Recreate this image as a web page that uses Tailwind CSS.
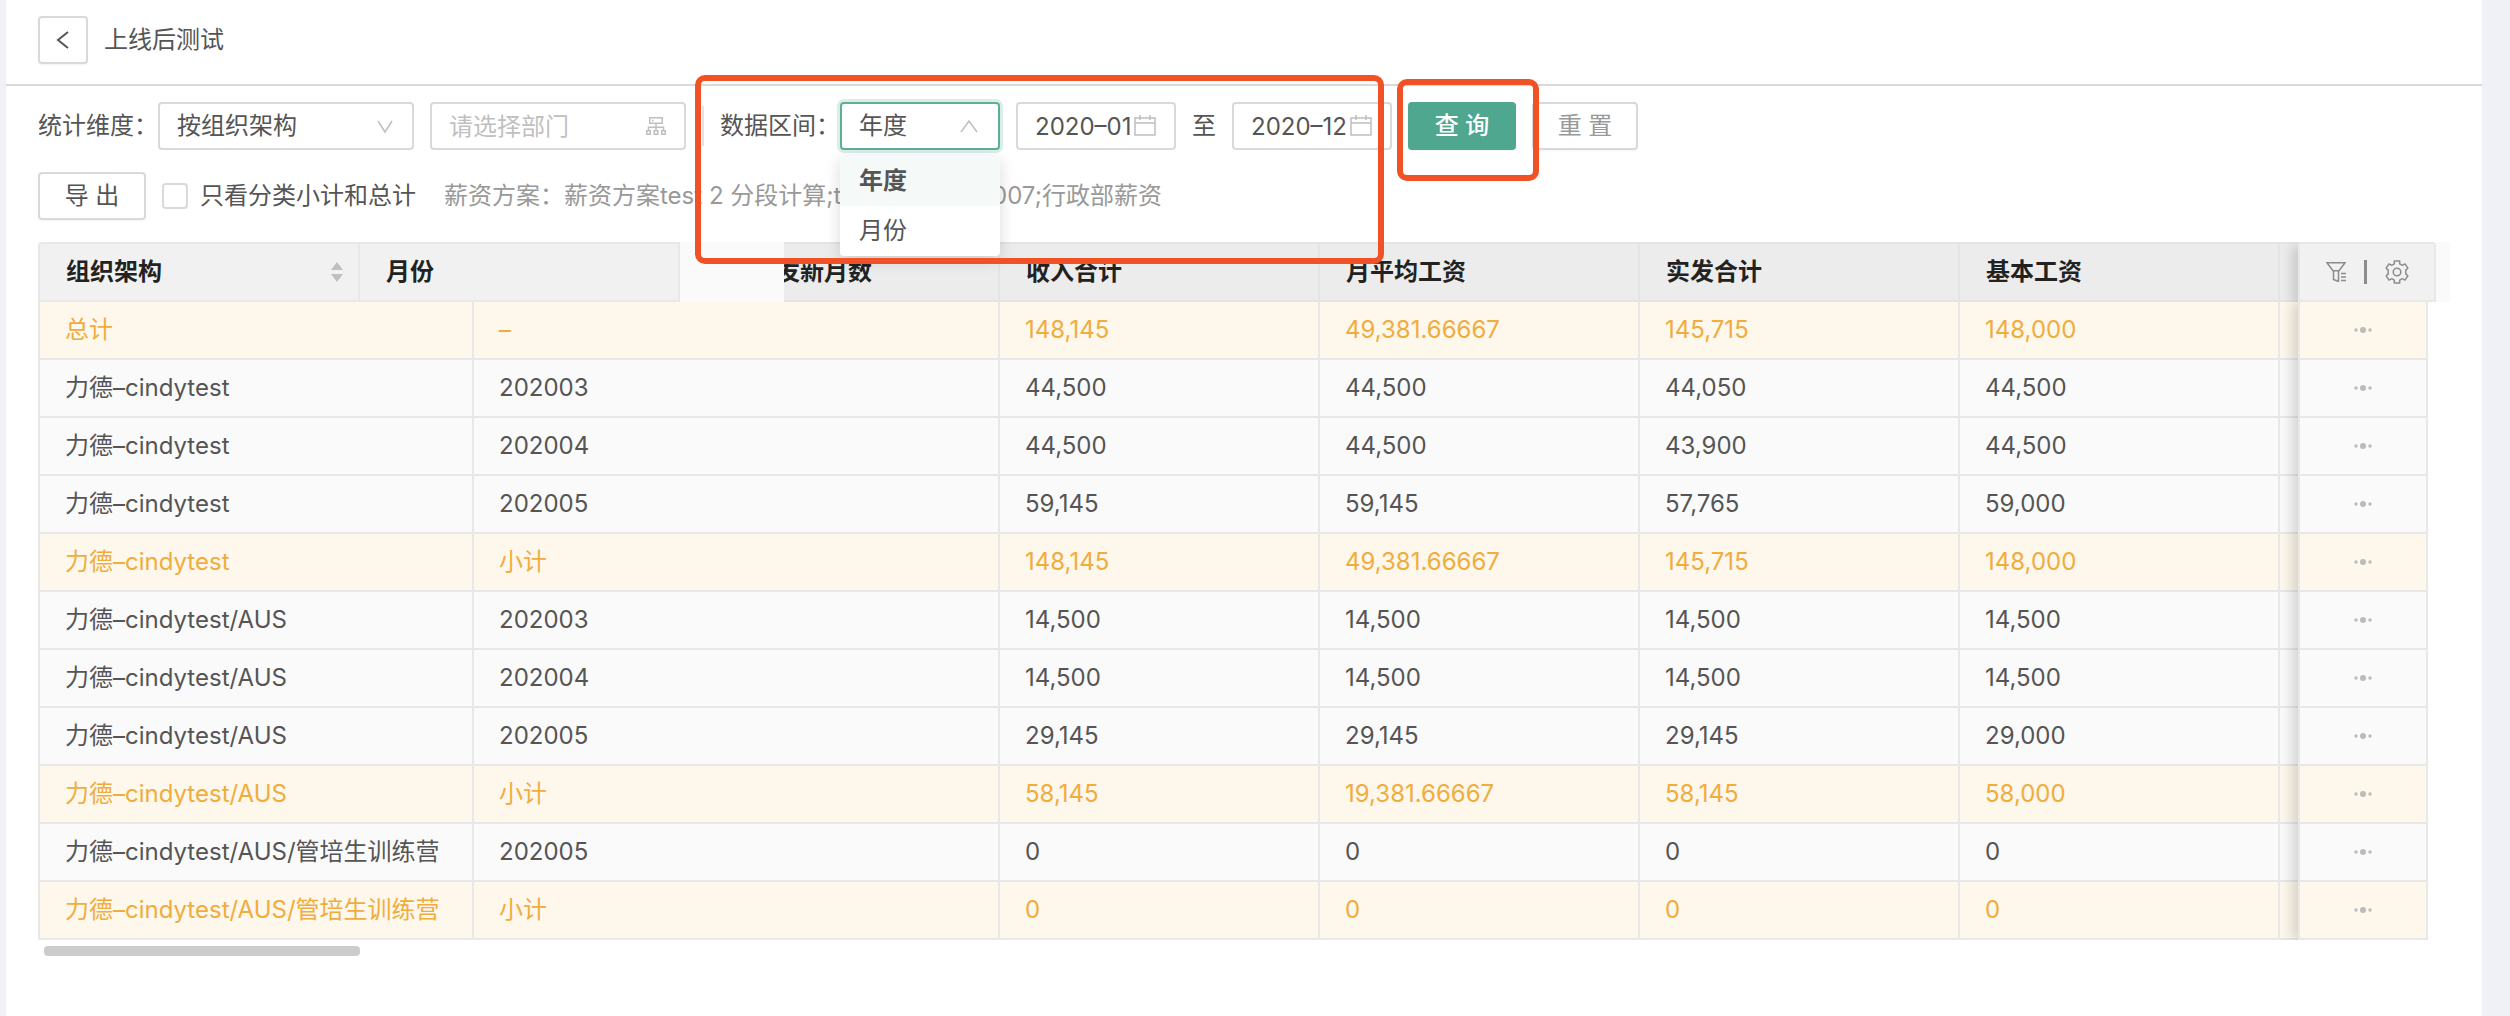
<!DOCTYPE html>
<html lang="zh-CN">
<head>
  <meta charset="UTF-8" />
  <meta name="viewport" content="width=device-width,initial-scale=1.0" />
  <title>上线后测试</title>
  <script src="https://cdn.jsdelivr.net/npm/@tailwindcss/browser@4"></script>
</head>

<body class="bg-[#f0f1f6] font-['Inter','Noto_Sans_CJK_SC',sans-serif] text-[24px] leading-[36px] text-[#555] min-h-screen">

  <main class="relative ml-[6px] mr-[28px] min-h-screen bg-white overflow-hidden">

    <!-- HEADER -->
    <header class="flex items-center gap-4 h-[86px] px-8 pb-1 border-b-2 border-[#d9d9d9]">
      <button type="button" aria-label="返回" class="flex items-center justify-center w-[50px] h-12 border-2 border-[#d9d9d9] rounded-[4px] shadow-xs">
        <svg class="w-5 h-5" viewBox="0 0 20 20" fill="none" stroke="#555" stroke-width="2"><path d="M15 2 5 10l10 8" /></svg>
      </button>
      <h1>上线后测试</h1>
    </header>

    <!-- FILTERS -->
    <form class="flex items-center px-8 pt-4 whitespace-nowrap">
      <label for="dimension">统计维度：</label>
      <div class="relative mr-4">
        <select id="dimension" class="appearance-none block w-[256px] h-12 pl-[17px] pr-12 border-2 border-[#d9d9d9] rounded-[4px] bg-white">
          <option>按组织架构</option>
        </select>
        <svg class="absolute right-5 top-4 w-[18px] h-[18px] pointer-events-none" viewBox="0 0 18 18" fill="none" stroke="#bfbfbf" stroke-width="1.500"><path d="M2 3 9 14 16 3" /></svg>
      </div>
      <div class="relative mr-4">
        <input id="dept" aria-label="部门" placeholder="请选择部门" class="block w-[256px] h-12 pl-[17px] pr-12 border-2 border-[#d9d9d9] rounded-[4px] placeholder:text-[#bfbfbf]">
        <svg class="absolute right-5 top-[14px] w-5 h-5 pointer-events-none" viewBox="0 0 20 20" fill="none" stroke="#bfbfbf" stroke-width="1.500"><path d="M3.700 1.700h12.600v5.600H3.700zM10 7.300v7M2.500 14.300v-3h15v3M.7 14.700h3.600v3.600H.7zM8.200 14.700h3.600v3.600H8.200zM15.700 14.700h3.600v3.600h-3.600zM6 4.500h1.500" /></svg>
      </div>
      <span class="w-[2px] h-10 mr-4 bg-[#e4e4e4]"></span>

      <label for="range">数据区间：</label>
      <div class="relative mr-4">
        <select id="range" class="appearance-none block w-[160px] h-12 pl-[17px] pr-12 border-2 border-[#5bb198] rounded-[4px] bg-white ring-3 ring-[#4fa78f]/20">
          <option>年度</option>
          <option>月份</option>
        </select>
        <svg class="absolute right-[22px] top-4 w-[18px] h-[18px] pointer-events-none" viewBox="0 0 18 18" fill="none" stroke="#bfbfbf" stroke-width="1.500"><path d="M1 14 9 3 17 14" /></svg>
        <ul class="absolute z-10 left-0 top-[54px] w-full bg-white rounded-[4px] shadow-[0_4px_16px_rgba(0,0,0,0.15)] leading-[50px]">
          <li class="px-[19px] bg-[#f5faf8] font-semibold">年度</li>
          <li class="px-[19px]">月份</li>
        </ul>
      </div>
      <div class="relative mr-4">
        <input aria-label="开始月份" value="2020–01" class="block w-[160px] h-12 pl-[17px] pr-4 border-2 border-[#d9d9d9] rounded-[4px]">
        <svg class="absolute right-5 top-3 w-[22px] h-[22px] pointer-events-none" viewBox="0 0 22 22" fill="none" stroke="#bfbfbf" stroke-width="1.500"><path d="M1 4h20v17H1zM1 9h20M6 1v5M16 1v5" /></svg>
      </div>
      <span class="mr-4">至</span>
      <div class="relative mr-4">
        <input aria-label="结束月份" value="2020–12" class="block w-[160px] h-12 pl-[17px] pr-4 border-2 border-[#d9d9d9] rounded-[4px]">
        <svg class="absolute right-5 top-3 w-[22px] h-[22px] pointer-events-none" viewBox="0 0 22 22" fill="none" stroke="#bfbfbf" stroke-width="1.500"><path d="M1 4h20v17H1zM1 9h20M6 1v5M16 1v5" /></svg>
      </div>
      <button type="submit" class="w-[108px] h-12 mr-4 rounded-[4px] bg-[#4fa78f] text-white font-medium shadow-xs">查 询</button>
      <button type="reset" class="w-[106px] h-12 border-2 border-[#d9d9d9] rounded-[4px] text-[#999] shadow-xs">重 置</button>
    </form>

    <!-- TOOLBAR -->
    <div class="flex items-center px-8 py-[22px] whitespace-nowrap">
      <button type="button" class="w-[108px] h-12 mr-4 border-2 border-[#d9d9d9] rounded-[4px] shadow-xs">导 出</button>
      <input id="subtotal" type="checkbox" class="appearance-none w-[26px] h-[26px] mr-3 border-2 border-[#d9d9d9] rounded-[4px]">
      <label for="subtotal" class="mr-7">只看分类小计和总计</label>
      <p class="text-[#999]">薪资方案：薪资方案test 2 分段计算;test薪资表202007;行政部薪资</p>
    </div>

    <!-- TABLE HEAD -->
    <div class="flex mx-8 font-semibold text-[#222] bg-[#fafafa]">
      <table class="w-[642px] shrink-0 mr-[104px] table-fixed border-separate border-spacing-0 bg-[#f1f1f1] border-2 border-r-0 border-[#e8e8e8] rounded-tl-[4px]">
        <tr class="h-14 text-left">
          <th class="pl-[26px] pr-[15px] border-r-2 border-[#e8e8e8] font-semibold">
            <div class="flex items-center justify-between">组织架构
              <svg class="w-3 h-5" viewBox="0 0 12 20" fill="#bfbfbf"><path d="M6 0 12 8H0zM6 20 0 12h12z" /></svg>
            </div>
          </th>
          <th class="pl-[26px] border-r-2 border-[#e8e8e8] font-semibold">月份</th>
        </tr>
      </table>
      <div class="flex-1 overflow-hidden bg-[#ececec] border-y-2 border-[#e4e4e6]">
        <table class="w-[1570px] -ml-[34px] table-fixed border-separate border-spacing-0 text-left">
          <tr class="h-14">
            <th class="w-[250px] pl-[26px] border-r-2 border-[#e4e4e6] font-semibold">发新月数</th>
            <th class="w-[320px] pl-[26px] border-r-2 border-[#e4e4e6] font-semibold">收入合计</th>
            <th class="w-[320px] pl-[26px] border-r-2 border-[#e4e4e6] font-semibold">月平均工资</th>
            <th class="w-[320px] pl-[26px] border-r-2 border-[#e4e4e6] font-semibold">实发合计</th>
            <th class="w-[320px] pl-[26px] border-r-2 border-[#e4e4e6] font-semibold">基本工资</th>
            <th></th>
          </tr>
        </table>
      </div>
      <div class="relative flex items-center justify-center w-[138px] h-[60px] gap-[18px] bg-[#f1f1f1] border-2 border-[#e8e8e8] rounded-tr-[4px] shadow-[-6px_4px_12px_rgba(0,0,0,0.15)] [clip-path:inset(0_0_0_-20px)]">
        <button type="button" aria-label="筛选">
          <svg class="w-5 h-5" viewBox="0 0 20 20" fill="none" stroke="#8c8c8c" stroke-width="1.500"><path d="M1 .8h18l-6 8H7zM7.500 9v8.500l5 2V9M15 11.500h5M15 15h5M15 18.500h5" /></svg>
        </button>
        <span class="w-[3px] h-6 bg-[#8c8c8c]"></span>
        <button type="button" aria-label="设置">
          <svg class="w-6 h-6" viewBox="0 0 24 24" fill="none" stroke="#8c8c8c" stroke-width="1.500" stroke-linejoin="round"><path d="M9.300 1h5.400v2.800l2.600 1.500L20 3.900l2.800 4.300-2 1.900v3.800l2 1.900L20 20.100l-2.700-1.400-2.600 1.500V23H9.300v-2.800l-2.600-1.500L4 20.100l-2.800-4.300 2-1.900v-3.800l-2-1.900L4 3.900l2.700 1.400 2.600-1.500z" /><circle cx="12" cy="12" r="3.800" /></svg>
        </button>
      </div>
      <span class="w-[14px]"></span>
    </div>

    <!-- TABLE BODY -->
    <div class="flex ml-8 mr-[54px]">
      <div class="flex-1 overflow-hidden">
        <table class="w-[2262px] table-fixed border-separate border-spacing-0 border-l-2 border-[#e8e8e8]">
          <colgroup>
            <col class="w-[434px]"><col class="w-[526px]"><col class="w-[320px]"><col class="w-[320px]"><col class="w-[320px]"><col class="w-[320px]"><col>
          </colgroup>
          <tbody id="rows"></tbody>
        </table>
      </div>
      <table class="relative w-[130px] table-fixed border-separate border-spacing-0 border-l-2 border-[#e8e8e8] shadow-[-6px_0_12px_rgba(0,0,0,0.15)] [clip-path:inset(0_0_0_-20px)]">
        <tbody id="actions"></tbody>
      </table>
    </div>
    <div class="w-[316px] h-[10px] mt-[6px] ml-[38px] rounded-[4px] bg-[#ccc]"></div>

    <!-- MARKS -->
    <div class="absolute z-20 left-[689px] top-[75px] w-[689px] h-[189px] border-6 border-[#f05125] rounded-[10px] pointer-events-none"></div>
    <div class="absolute z-20 left-[1391px] top-[79px] w-[142px] h-[102px] border-6 border-[#f05125] rounded-[10px] pointer-events-none"></div>
  </main>

  <!-- SCRIPT -->
  <script>
    const data = [
      ["总计", "–", "148,145", "49,381.66667", "145,715", "148,000"],
      ["力德–cindytest", "202003", "44,500", "44,500", "44,050", "44,500"],
      ["力德–cindytest", "202004", "44,500", "44,500", "43,900", "44,500"],
      ["力德–cindytest", "202005", "59,145", "59,145", "57,765", "59,000"],
      ["力德–cindytest", "小计", "148,145", "49,381.66667", "145,715", "148,000"],
      ["力德–cindytest/AUS", "202003", "14,500", "14,500", "14,500", "14,500"],
      ["力德–cindytest/AUS", "202004", "14,500", "14,500", "14,500", "14,500"],
      ["力德–cindytest/AUS", "202005", "29,145", "29,145", "29,145", "29,000"],
      ["力德–cindytest/AUS", "小计", "58,145", "19,381.66667", "58,145", "58,000"],
      ["力德–cindytest/AUS/管培生训练营", "202005", "0", "0", "0", "0"],
      ["力德–cindytest/AUS/管培生训练营", "小计", "0", "0", "0", "0"]
    ];

    const dots = `<svg class="mx-auto w-[18px] h-[6px]" viewBox="0 0 18 6" fill="#bbb"><circle cx="2" cy="3" r="1.700"/><circle cx="9" cy="3" r="3"/><circle cx="16" cy="3" r="1.700"/></svg>`;

    data.forEach(row => {
      // 合计行高亮
      const total = row[0] === "总计" || row[1] === "小计";
      const color = total ? "bg-[#fef7eb] text-[#f0ad3e]" : "bg-[#fafafa]";

      const cells = [...row, ""].map(v =>
        `<td class="pl-[25px] border-r-2 border-b-2 border-[#e8e8e8] whitespace-nowrap">${v}</td>`).join("");
      document.getElementById("rows").insertAdjacentHTML("beforeend",
        `<tr class="h-[58px] ${color}">${cells}</tr>`);
      document.getElementById("actions").insertAdjacentHTML("beforeend",
        `<tr class="h-[58px] ${color}"><td class="border-r-2 border-b-2 border-[#e8e8e8]"><button type="button" aria-label="更多" class="block w-full">${dots}</button></td></tr>`);
    });
  </script>
</body>
</html>
